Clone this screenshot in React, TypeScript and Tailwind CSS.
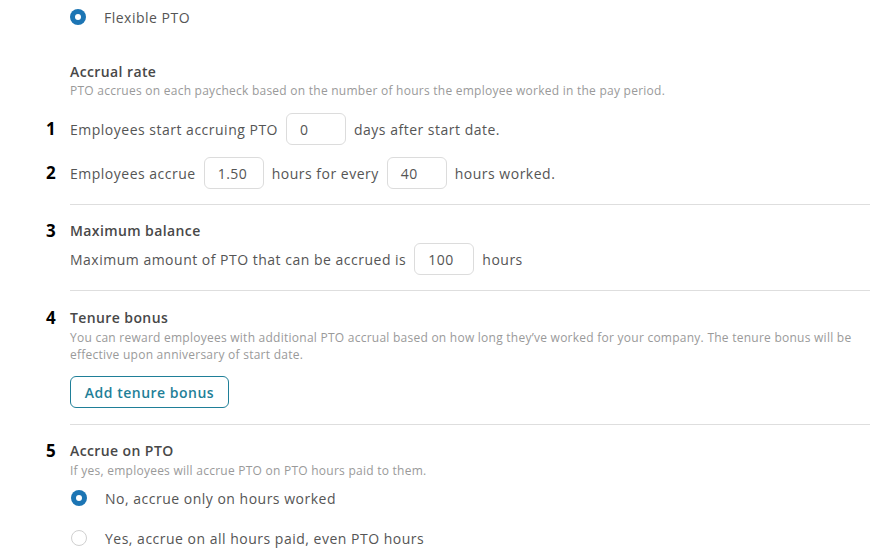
import React from 'react';

function Radio({ checked }: { checked?: boolean }) {
  return checked ? (
    <span className="flex h-4 w-4 items-center justify-center rounded-full bg-[#1c75b4]">
      <span className="h-[6px] w-[6px] rounded-full bg-white" />
    </span>
  ) : (
    <span className="h-4 w-4 rounded-full border border-[#d0d0d0] bg-white" />
  );
}

function NumInput({ value }: { value: string }) {
  return (
    <span className="mx-2 flex h-8 w-[60px] items-center rounded-md border border-[#dcdcdc] bg-white pl-[13px] text-[14px] text-[#555]">
      {value}
    </span>
  );
}

function Step({ n }: { n: number }) {
  return <span className="w-6 shrink-0 text-[17px] font-bold leading-5 tracking-normal text-black">{n}</span>;
}

export default function App() {
  return (
    <div className="min-h-screen bg-white font-['Open_Sans',sans-serif] text-[14px] tracking-[0.5px] text-[#555]">
      <div className="ml-[46px] w-[824px]">
        <div className="flex h-[34px] items-center pl-6">
          <Radio checked />
          <span className="ml-[18px]">Flexible PTO</span>
        </div>

        <div className="mt-[28px] pl-6">
          <div className="font-semibold leading-5 tracking-[0.4px] text-[#484848]">Accrual rate</div>
          <div className="mt-px text-[12px] leading-4 tracking-[0.25px] text-[#9a9a9a]">
            PTO accrues on each paycheck based on the number of hours the employee worked in the pay period.
          </div>
        </div>

        <div className="mt-[14px] flex items-center">
          <Step n={1} />
          <span>Employees start accruing PTO</span>
          <NumInput value="0" />
          <span>days after start date.</span>
        </div>
        <div className="mt-3 flex items-center">
          <Step n={2} />
          <span>Employees accrue</span>
          <NumInput value="1.50" />
          <span>hours for every</span>
          <NumInput value="40" />
          <span>hours worked.</span>
        </div>

        <div className="ml-6 mt-[15px] border-t border-[#dedede]" />

        <div className="mt-4 flex items-center">
          <Step n={3} />
          <span className="font-semibold leading-5 tracking-[0.4px] text-[#484848]">Maximum balance</span>
        </div>
        <div className="mt-[2px] flex items-center pl-6">
          <span>Maximum amount of PTO that can be accrued is</span>
          <NumInput value="100" />
          <span>hours</span>
        </div>

        <div className="ml-6 mt-[15px] border-t border-[#dedede]" />

        <div className="mt-[17px] flex items-center">
          <Step n={4} />
          <span className="font-semibold leading-5 tracking-[0.4px] text-[#484848]">Tenure bonus</span>
        </div>
        <div className="mt-px pl-6 text-[12px] leading-[17px] tracking-[0.25px] text-[#9a9a9a]">
          You can reward employees with additional PTO accrual based on how long they’ve worked for your company. The tenure bonus will be
          <br />
          effective upon anniversary of start date.
        </div>
        <div className="mt-[13px] pl-6">
          <button className="h-8 w-[159px] rounded-md border border-[#1f7f98] bg-white text-[14px] font-semibold tracking-[0.5px] text-[#1f7f98]">
            Add tenure bonus
          </button>
        </div>

        <div className="ml-6 mt-4 border-t border-[#dedede]" />

        <div className="mt-4 flex items-center">
          <Step n={5} />
          <span className="font-semibold leading-5 tracking-[0.4px] text-[#484848]">Accrue on PTO</span>
        </div>
        <div className="mt-[2px] pl-6 text-[12px] leading-[15px] tracking-[0.25px] text-[#9a9a9a]">
          If yes, employees will accrue PTO on PTO hours paid to them.
        </div>
        <div className="flex h-10 items-center pl-[25px]">
          <Radio checked />
          <span className="ml-[18px]">No, accrue only on hours worked</span>
        </div>
        <div className="flex h-10 items-center pl-[25px]">
          <Radio />
          <span className="ml-[18px]">Yes, accrue on all hours paid, even PTO hours</span>
        </div>
      </div>
    </div>
  );
}
